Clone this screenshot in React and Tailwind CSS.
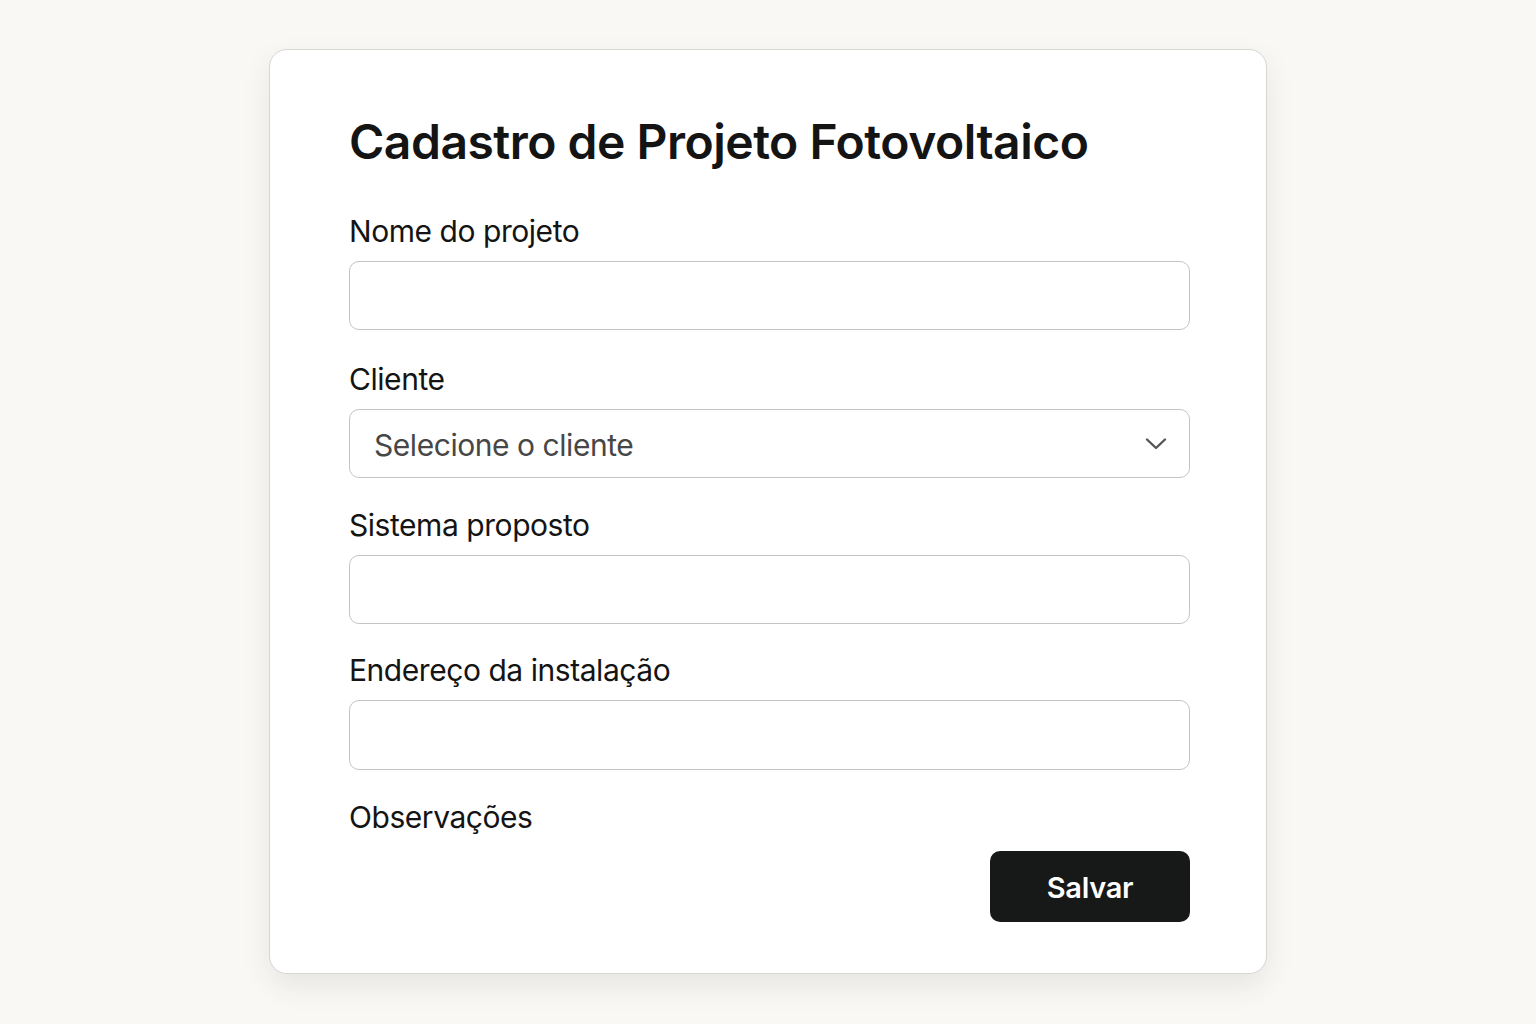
import React from "react";

function Label({ children }) {
  return (
    <div className="text-[30px] leading-[34px] text-[#141414] tracking-[-0.45px]">{children}</div>
  );
}

function Input() {
  return (
    <div className="mt-[13px] h-[69px] w-full rounded-[10px] border border-[#c4c4c4] bg-white" />
  );
}

export default function App() {
  return (
    <div
      className="min-h-[1024px] w-full bg-[#f9f8f4] pt-[49px]"
      style={{ fontFamily: "Inter, 'Noto Sans', sans-serif" }}
    >
      <div className="mx-auto flex w-[998px] h-[925px] flex-col rounded-[18px] border border-[#d6d6d3] bg-white pl-[79px] pr-[76px] pt-[66px] shadow-[0_12px_30px_rgba(0,0,0,0.08)]">
        <h1 className="text-[48px] font-semibold leading-[52px] tracking-[-0.5px] text-[#141414]">
          Cadastro de Projeto Fotovoltaico
        </h1>
        <div className="mt-[46px]">
          <Label>Nome do projeto</Label>
          <Input />
        </div>
        <div className="mt-[32px]">
          <Label>Cliente</Label>
          <div className="mt-[13px] flex h-[69px] w-full items-center justify-between rounded-[10px] border border-[#c4c4c4] bg-white pl-[24px] pr-[22px]">
            <span className="pt-[3px] text-[30px] text-[#474747] tracking-[-0.45px]">Selecione o cliente</span>
            <svg width="22" height="14" viewBox="0 0 22 14" fill="none">
              <path d="M2 2.5 L11 11 L20 2.5" stroke="#555" strokeWidth="2.4" strokeLinecap="round" strokeLinejoin="round" />
            </svg>
          </div>
        </div>
        <div className="mt-[30px]">
          <Label>Sistema proposto</Label>
          <Input />
        </div>
        <div className="mt-[29px]">
          <Label>Endereço da instalação</Label>
          <div className="mt-[13px] h-[70px] w-full rounded-[10px] border border-[#c4c4c4] bg-white" />
        </div>
        <div className="mt-[30px]">
          <Label>Observações</Label>
        </div>
        <div className="mt-[17px] flex justify-end">
          <button className="flex h-[71px] w-[200px] items-center justify-center rounded-[10px] bg-[#171818] pt-[3px] text-[29px] font-semibold text-white tracking-[-0.3px]">
            Salvar
          </button>
        </div>
      </div>
    </div>
  );
}
